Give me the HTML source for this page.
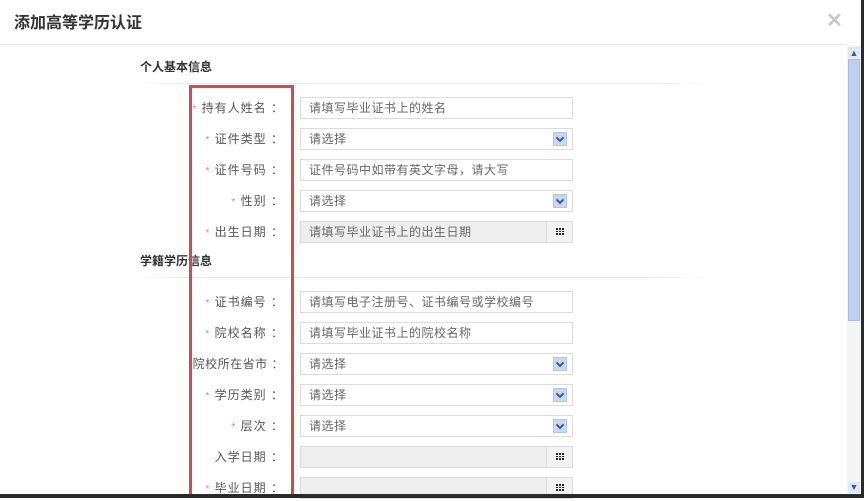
<!DOCTYPE html>
<html><head><meta charset="utf-8"><style>
*{margin:0;padding:0;box-sizing:border-box}
body{width:864px;height:498px;overflow:hidden;background:#fff;position:relative;font-family:"Liberation Sans","Noto Sans CJK SC","WenQuanYi Zen Hei",sans-serif;color:#333}
.a{position:absolute}
.title{left:14px;top:9px;font-size:16px;font-weight:bold;color:#333}
.hline{left:0;top:44px;width:847px;height:1px;background:#e4e4e4}
.sec{font-size:12px;font-weight:bold;color:#333}
.sl{height:1px;background:linear-gradient(90deg,#fff,#e8e8e8 10%,#e8e8e8 90%,#fff)}
.lab{width:152px;left:132px;text-align:right;font-size:12px;color:#555;line-height:22px;letter-spacing:1px}
.lab i{font-style:normal;color:#e88080;font-size:10px}
.in{left:300px;width:273px;height:22px;border:1px solid #dcdcdc;background:#fff;font-size:12px;color:#666;line-height:20px;padding-left:8px;letter-spacing:0.5px}
.in.g{background:#eee}
.dd{position:absolute;right:5px;top:3px;width:14px;height:14px;background:#c9d7ef;border:1px solid #b6c6e0}
.dd:after{content:"";position:absolute;left:3px;top:2px;width:4px;height:4px;border-right:2px solid #3b5a90;border-bottom:2px solid #3b5a90;transform:rotate(45deg)}
.cal{position:absolute;right:0;top:0;width:26px;height:20px;border-left:1px solid #dcdcdc;background:#f2f2f2}
.cal:after{content:"";position:absolute;left:9px;top:6px;width:8px;height:7px;background:
linear-gradient(90deg,#222 2px,transparent 2px,transparent 3px,#222 3px,#222 5px,transparent 5px,transparent 6px,#222 6px);}
.cal:before{content:"";position:absolute;left:9px;top:8px;width:8px;height:1px;background:#f2f2f2;z-index:2;box-shadow:0 2px 0 #f2f2f2}
</style></head><body>
<div class="a title">添加高等学历认证</div>
<div class="a" style="left:826px;top:8px;font-size:20px;color:#c8c8c8;font-weight:bold">✕</div>
<div class="a hline"></div>

<div class="a sec" style="left:140px;top:58px">个人基本信息</div>
<div class="a sl" style="left:135px;top:83px;width:575px"></div>
<div class="a sec" style="left:140px;top:252px">学籍学历信息</div>
<div class="a sl" style="left:135px;top:277px;width:575px"></div>

<div class="a lab" style="top:97px"><i>*</i> 持有人姓名 ：</div>
<div class="a in" style="top:97px">请填写毕业证书上的姓名</div>
<div class="a lab" style="top:128px"><i>*</i> 证件类型 ：</div>
<div class="a in" style="top:128px">请选择<span class="dd"></span></div>
<div class="a lab" style="top:159px"><i>*</i> 证件号码 ：</div>
<div class="a in" style="top:159px">证件号码中如带有英文字母，请大写</div>
<div class="a lab" style="top:190px"><i>*</i> 性别 ：</div>
<div class="a in" style="top:190px">请选择<span class="dd"></span></div>
<div class="a lab" style="top:221px"><i>*</i> 出生日期 ：</div>
<div class="a in g" style="top:221px">请填写毕业证书上的出生日期<span class="cal"></span></div>

<div class="a lab" style="top:291px"><i>*</i> 证书编号 ：</div>
<div class="a in" style="top:291px">请填写电子注册号、证书编号或学校编号</div>
<div class="a lab" style="top:322px"><i>*</i> 院校名称 ：</div>
<div class="a in" style="top:322px">请填写毕业证书上的院校名称</div>
<div class="a lab" style="top:353px;letter-spacing:0.5px"><i>*</i>院校所在省市 ：</div>
<div class="a in" style="top:353px">请选择<span class="dd"></span></div>
<div class="a lab" style="top:384px"><i>*</i> 学历类别 ：</div>
<div class="a in" style="top:384px">请选择<span class="dd"></span></div>
<div class="a lab" style="top:415px"><i>*</i> 层次 ：</div>
<div class="a in" style="top:415px">请选择<span class="dd"></span></div>
<div class="a lab" style="top:446px">入学日期 ：</div>
<div class="a in g" style="top:446px"><span class="cal"></span></div>
<div class="a lab" style="top:477px"><i>*</i> 毕业日期 ：</div>
<div class="a in g" style="top:477px"><span class="cal"></span></div>

<div class="a" style="left:189px;top:85px;width:105px;height:412px;border:3px solid #d24a4a"></div>

<div class="a" style="left:847px;top:45px;width:14px;height:449px;background:#f4f4f4"></div>
<div class="a" style="left:848px;top:47px;width:12px;height:11px;background:#dfe8f7;color:#3b5a90;font-size:9px;text-align:center;line-height:12px">▲</div>
<div class="a" style="left:848px;top:59px;width:12px;height:262px;background:#bdd0f0;border:1px solid #a9bee3"></div>
<div class="a" style="left:848px;top:482px;width:12px;height:11px;background:#dfe8f7;color:#3b5a90;font-size:9px;text-align:center;line-height:11px">▼</div>
<div class="a" style="left:861px;top:0;width:3px;height:498px;background:#2a2a2a"></div>
<div class="a" style="left:0;top:494px;width:864px;height:4px;background:#2a2a2a"></div>
</body></html>
